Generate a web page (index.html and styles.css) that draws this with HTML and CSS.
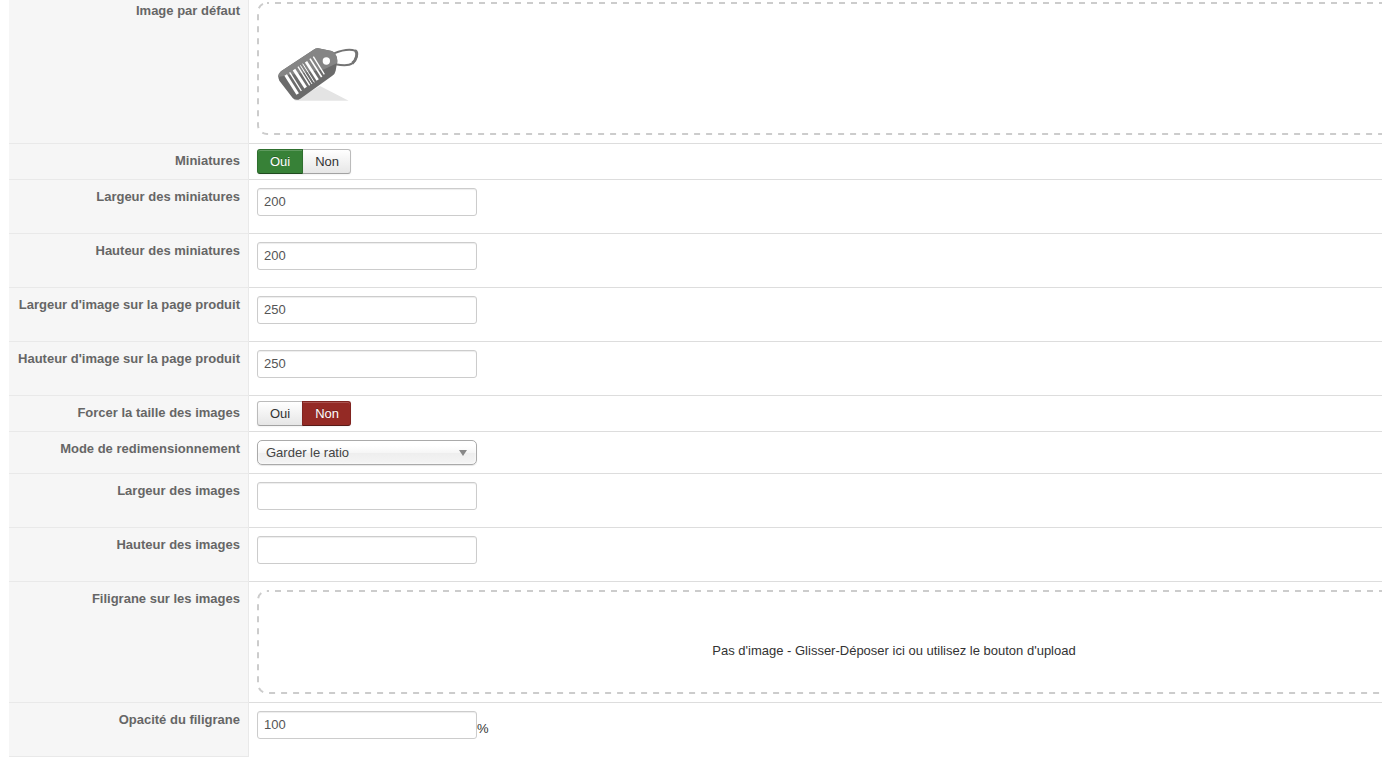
FILE: index.html
```html
<!DOCTYPE html>
<html lang="fr">
<head>
    <meta charset="UTF-8">
    <meta name="viewport" content="width=device-width, initial-scale=1.0">
    <title>Configuration des images</title>
    <link rel="stylesheet" href="styles.css">
</head>
<body>
    <form class="settings">
        <div class="row row-first">
            <div class="row-label">Image par défaut</div>
            <div class="row-value">
                <div class="dropzone dropzone-image">
                    <svg class="dropzone-border" aria-hidden="true"><rect class="dropzone-dash" x="1" y="1" rx="9"/></svg>
                    <svg class="tag-image" width="110" height="75" viewBox="0 0 330 225" role="img" aria-label="Étiquette">
                        <path d="M88 197 L165 153 L251 197 Z" fill="#e4e4e4"/>
                        <path d="M207 55 C235 44 258 43 270 47 C281 53 273 77 262 85 C252 93 232 92 211 88" fill="none" stroke="#747474" stroke-width="6"/>
                        <path d="M270 47 C281 53 273 77 262 85" fill="none" stroke="#747474" stroke-width="9"/>
                        <path d="M148 43 Q153 39 160 40 L200 48 Q206 50 210 56 Q218 66 217 78 L212 107 Q210 117 202 122 L106 191 Q93 199 83 189 L43 137 Q35 121 48 109 Z" fill="#6b6b6b"/>
                        <path d="M148 43 Q153 39 160 40 L200 48 Q206 50 210 56 Q218 66 217 84 L178 103 L39 126 Q39 116 48 109 Z" fill="#858585"/>
                        <circle cx="184" cy="78" r="11" fill="#fff"/>
                        <g stroke="#fff">
                            <path d="M62 120 L98 177" stroke-width="9"/>
                            <path d="M74 112 L109 168" stroke-width="4"/>
                            <path d="M87 104 L122 158" stroke-width="9"/>
                            <path d="M99 95 L134 151" stroke-width="4"/>
                            <path d="M106 91 L141 147" stroke-width="3"/>
                            <path d="M113 86 L148 142" stroke-width="3"/>
                            <path d="M123 80 L158 135" stroke-width="8"/>
                            <path d="M135 71 L170 126" stroke-width="5"/>
                            <path d="M145 65 L178 118" stroke-width="4"/>
                        </g>
                    </svg>
                </div>
            </div>
        </div>

        <div class="row" role="radiogroup" aria-labelledby="thumbsLabel">
            <div class="row-label" id="thumbsLabel">Miniatures</div>
            <div class="row-value row-toggle">
                <div class="toggle">
                    <input type="radio" class="toggle-input" id="thumbsYes" name="thumbs" value="1" checked>
                    <label class="toggle-btn toggle-yes" for="thumbsYes">Oui</label>
                    <input type="radio" class="toggle-input" id="thumbsNo" name="thumbs" value="0">
                    <label class="toggle-btn toggle-no" for="thumbsNo">Non</label>
                </div>
            </div>
        </div>

        <div class="row">
            <label class="row-label" for="thumbWidth">Largeur des miniatures</label>
            <div class="row-value"><input type="text" class="text-input" id="thumbWidth" value="200"></div>
        </div>
        <div class="row">
            <label class="row-label" for="thumbHeight">Hauteur des miniatures</label>
            <div class="row-value"><input type="text" class="text-input" id="thumbHeight" value="200"></div>
        </div>
        <div class="row">
            <label class="row-label" for="productWidth">Largeur d'image sur la page produit</label>
            <div class="row-value"><input type="text" class="text-input" id="productWidth" value="250"></div>
        </div>
        <div class="row">
            <label class="row-label" for="productHeight">Hauteur d'image sur la page produit</label>
            <div class="row-value"><input type="text" class="text-input" id="productHeight" value="250"></div>
        </div>

        <div class="row" role="radiogroup" aria-labelledby="forceLabel">
            <div class="row-label" id="forceLabel">Forcer la taille des images</div>
            <div class="row-value row-toggle">
                <div class="toggle">
                    <input type="radio" class="toggle-input" id="forceYes" name="force" value="1">
                    <label class="toggle-btn toggle-yes" for="forceYes">Oui</label>
                    <input type="radio" class="toggle-input" id="forceNo" name="force" value="0" checked>
                    <label class="toggle-btn toggle-no" for="forceNo">Non</label>
                </div>
            </div>
        </div>

        <div class="row">
            <label class="row-label" for="resizeMode">Mode de redimensionnement</label>
            <div class="row-value">
                <div class="select-wrap">
                    <select class="select" id="resizeMode">
                        <option>Garder le ratio</option>
                    </select>
                </div>
            </div>
        </div>

        <div class="row">
            <label class="row-label" for="imageWidth">Largeur des images</label>
            <div class="row-value"><input type="text" class="text-input" id="imageWidth"></div>
        </div>
        <div class="row">
            <label class="row-label" for="imageHeight">Hauteur des images</label>
            <div class="row-value"><input type="text" class="text-input" id="imageHeight"></div>
        </div>

        <div class="row">
            <div class="row-label">Filigrane sur les images</div>
            <div class="row-value">
                <div class="dropzone dropzone-empty">
                    <svg class="dropzone-border" aria-hidden="true"><rect class="dropzone-dash" x="1" y="1" rx="9"/></svg>
                    Pas d'image - Glisser-Déposer ici ou utilisez le bouton d'upload
                </div>
            </div>
        </div>

        <div class="row row-last">
            <label class="row-label" for="opacity">Opacité du filigrane</label>
            <div class="row-value">
                <input type="text" class="text-input" id="opacity" value="100">
                <span class="unit">%</span>
            </div>
        </div>
    </form>
</body>
</html>
```
FILE: styles.css
```css
* {
    box-sizing: border-box;
}
body {
    margin: 0;
    padding-left: 9px;
    background-color: #fff;
    color: #333;
    font-family: Arial, 'Liberation Sans', sans-serif;
    font-size: 13px;
    line-height: 18px;
    overflow-x: hidden;
}
/* the form is wider than the window, the dropzones run off the right side */
.settings {
    margin-right: -157px;
}
.row {
    display: flex;
}
.row-label {
    flex: 0 0 240px;
    padding: 8px;
    background-color: #f6f6f6;
    border-right: 1px solid #e9e9e9;
    border-bottom: 1px solid #e9e9e9;
    color: #666;
    font-weight: bold;
    text-align: right;
    white-space: nowrap;
}
.row-value {
    flex: 1;
    display: flex;
    align-items: flex-start;
    padding: 8px;
    border-bottom: 1px solid #ddd;
}
.row-first .row-label,
.row-first .row-value {
    padding-top: 2px;
}
.row-last .row-value {
    border-bottom-color: transparent;
}
.row-value.row-toggle {
    padding-top: 5px;
    padding-bottom: 5px;
}
.dropzone {
    position: relative;
    flex: 1;
}
/* svg outline, to get even 6px dashes */
.dropzone-border {
    position: absolute;
    top: 0;
    left: 0;
    width: 100%;
    height: 100%;
    pointer-events: none;
}
.dropzone-dash {
    width: calc(100% - 2px);
    height: calc(100% - 2px);
    fill: none;
    stroke: #ccc;
    stroke-width: 2px;
    stroke-dasharray: 6 6;
    stroke-dashoffset: 4px;
}
.dropzone-image {
    padding: 33px 8px 25px;
}
.dropzone-empty {
    padding: 52px 8px 34px;
    text-align: center;
}
.tag-image {
    display: block;
}
.text-input {
    width: 220px;
    height: 28px;
    margin: 0 0 9px;
    padding: 3px 6px 5px;
    border: 1px solid #ccc;
    border-radius: 3px;
    background-color: #fff;
    box-shadow: inset 0 1px 1px rgba(0, 0, 0, 0.075);
    color: #555;
    font-family: inherit;
    font-size: 13px;
    line-height: 18px;
}
.unit {
    margin-top: 9px;
}
.toggle {
    position: relative;
    display: flex;
}
.toggle-input {
    position: absolute;
    margin: 0;
    opacity: 0;
}
.toggle-btn {
    position: relative;
    height: 25px;
    padding: 3px 12px;
    border: 1px solid #bbb;
    border-bottom-color: #a2a2a2;
    background-image: linear-gradient(to bottom, #fff, #e6e6e6);
    box-shadow: inset 0 1px 0 rgba(255, 255, 255, 0.2), 0 1px 2px rgba(0, 0, 0, 0.05);
    cursor: pointer;
}
.toggle-yes {
    border-radius: 3px 0 0 3px;
}
.toggle-no {
    margin-left: -1px;
    padding-right: 11px;
    border-radius: 0 3px 3px 0;
}
.toggle-input:checked + .toggle-btn {
    z-index: 1;
    color: #fff;
    text-shadow: 0 -1px 0 rgba(0, 0, 0, 0.25);
    background-image: none;
}
.toggle-input:checked + .toggle-yes {
    background-color: #378137;
    border-color: #2f6f2f;
    border-bottom-color: #204b20;
}
.toggle-input:checked + .toggle-no {
    background-color: #942a25;
    border-color: #802420;
    border-bottom-color: #571916;
}
.select-wrap {
    position: relative;
    width: 220px;
}
.select-wrap::after {
    content: '';
    position: absolute;
    top: 10px;
    right: 10px;
    border: 4px solid transparent;
    border-top: 6px solid #888;
    border-bottom: none;
    pointer-events: none;
}
.select {
    display: block;
    width: 100%;
    height: 25px;
    margin: 0;
    padding: 0 24px 0 8px;
    border: 1px solid #aaa;
    border-radius: 5px;
    appearance: none;
    background: linear-gradient(to bottom, #fff 20%, #f6f6f6 50%, #eee 52%, #f4f4f4 100%);
    box-shadow: inset 0 0 3px #fff, 0 1px 1px rgba(0, 0, 0, 0.1);
    color: #444;
    font-family: inherit;
    font-size: 13px;
}
```
